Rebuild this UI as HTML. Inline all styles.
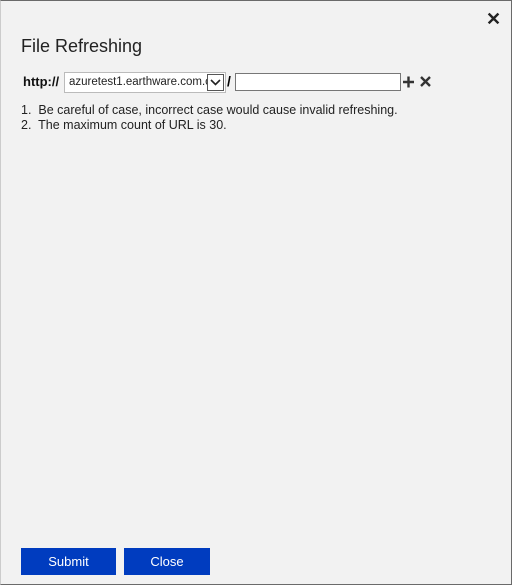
<!DOCTYPE html>
<html><head><style>
body{margin:0;width:512px;height:585px;background:#f2f2f2;font-family:"Liberation Sans",sans-serif;position:relative;overflow:hidden}
.frame{position:absolute;left:0;top:0;width:510px;height:583px;border:1px solid #6a6a6a;border-left-color:#ccc}
.abs{position:absolute}
h1{position:absolute;left:21px;top:36px;margin:0;font-weight:normal;font-size:18px;color:#222}
.btn{position:absolute;top:548px;height:27px;background:#003cbf;color:#fff;font-size:13px;text-align:center;line-height:27px}
</style></head><body>
<div class="frame"></div>
<div class="abs" style="left:486px;top:9px;font-size:18px;font-weight:bold;color:#222">✕</div>
<h1>File Refreshing</h1>
<div class="abs" style="left:23px;top:74px;font-size:13px;font-weight:bold;color:#111">http://</div>
<div class="abs" style="left:64px;top:72px;width:160px;height:19px;border:1px solid #bbb;background:#fff;overflow:hidden">
 <div class="abs" style="left:4px;top:3px;font-size:11.5px;color:#222;white-space:nowrap">azuretest1.earthware.com.c</div>
 <div class="abs" style="left:142px;top:1px;width:15px;height:15px;border:1px solid #555;background:#fff"><svg width="15" height="15"><path d="M3 5l4.5 4.5L12 5" stroke="#222" stroke-width="1.6" fill="none"/></svg></div>
</div>
<div class="abs" style="left:227px;top:73px;font-size:14px;font-weight:bold">/</div>
<div class="abs" style="left:235px;top:73px;width:164px;height:16px;border:1px solid #777;background:#fff"></div>
<svg class="abs" style="left:402px;top:75px" width="32" height="14"><path d="M1 7h11M6.5 1.5v11" stroke="#333" stroke-width="2.4"/><path d="M19 2l9 9M28 2l-9 9" stroke="#333" stroke-width="2.4"/></svg>
<div class="abs" style="left:21px;top:103px;font-size:12.5px;color:#222;line-height:14.5px">1.&nbsp; Be careful of case, incorrect case would cause invalid refreshing.<br>2.&nbsp; The maximum count of URL is 30.</div>
<div class="btn" style="left:21px;width:95px">Submit</div>
<div class="btn" style="left:124px;width:86px">Close</div>
</body></html>
